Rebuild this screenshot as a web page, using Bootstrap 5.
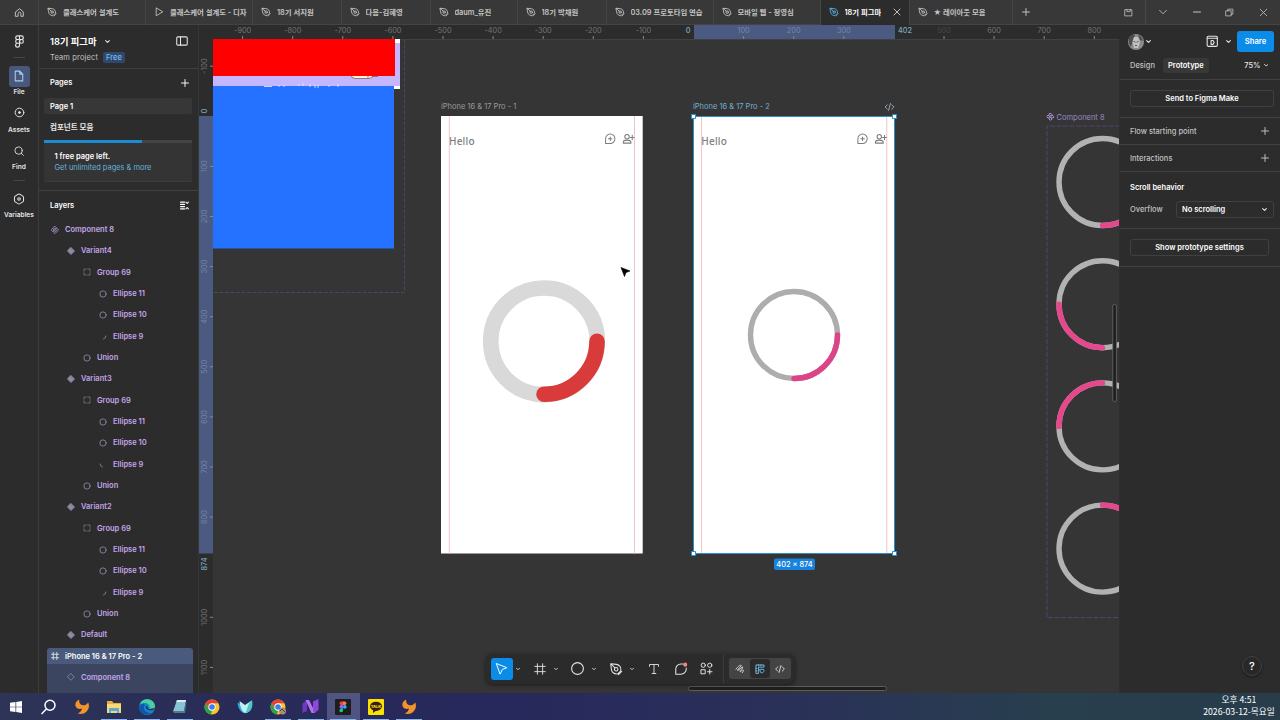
<!DOCTYPE html>
<html lang="en">
<head>
<meta charset="UTF-8" />
<meta name="viewport" content="width=device-width, initial-scale=1" />
<title>18기 피그마</title>
<link href="https://cdn.jsdelivr.net/npm/bootstrap@5.3.0/dist/css/bootstrap.min.css" rel="stylesheet" />
<style>
  body {
    width: 1280px;
    height: 720px;
    overflow: hidden;
    background-color: #2c2c2c;
    color: #e8e8e8;
    font-family: Inter, "Noto Sans CJK KR", sans-serif;
    font-size: 7.5px;
    line-height: 11px;
  }
  svg { flex-shrink: 0; display: block; }
  .ico {
    fill: none;
    stroke: currentColor;
    stroke-width: 1.4;
    stroke-linecap: round;
    stroke-linejoin: round;
  }
  .ink { color: #e4e4e4; }

  /* window tabs */
  #tabBar { height: 25px; background-color: #383838; color: #c4c4c4; border-bottom: 1px solid #444; }
  .file-tab { height: 25px; padding-left: 8px; gap: 6px; border-right: 1px solid #454545; font-size: 7.35px; font-weight: 600; }
  .file-tab .tab-title { overflow: hidden; white-space: nowrap; }
  .file-tab.current { background-color: #2c2c2c; color: #fff; }
  .file-tab.current > svg:first-child { color: #5db4e8; }
  .win-btn { width: 33.4px; }

  /* left rail */
  #rail { width: 39px; border-right: 1px solid #3d3d3d; font-size: 6.6px; font-weight: 600; }
  #rail .rail-line { width: 11px; height: 1px; background-color: #484848; }
  #rail .rail-btn { width: 21px; height: 21px; border-radius: 3px; }
  #rail .rail-btn.on { background-color: #48577a; color: #9fd0f5; }

  /* layers panel */
  #sidePanel { width: 160px; border-right: 1px solid #363636; }
  .side-head { height: 44px; padding: 7px 10px 0 11px; border-bottom: 1px solid #3e3e3e; }
  .file-name { font-size: 9.3px; font-weight: 600; }
  .plan-tag { background-color: #30496b; color: #77b9f5; border-radius: 2px; font-size: 7.5px; line-height: 11px; padding: 0 3px; font-weight: 500; }
  .section-row { height: 27px; padding: 0 9px 0 11px; font-weight: 600; }
  .page-row { height: 16px; margin: 2px 6px 0 5px; padding-left: 6px; font-weight: 600; background-color: #373737; border-radius: 2px; }
  .upsell { margin: 5px 6px 0 5px; height: 42px; background-color: #343434; border-radius: 2px; border-bottom: 1px solid #3d3d3d; }
  .upsell .progress { height: 3px; background-color: #444; border-radius: 0; }
  .upsell .progress-bar { background-color: #1c8bd2; }
  .upsell a { color: #64b2de; text-decoration: none; letter-spacing: -0.005em; }
  .layer-row { height: 21.33px; gap: 6px; color: #c2a5e8; font-weight: 600; }
  .layer-row .ico { color: #9288a5; stroke-width: 1.7; }
  .layer-row.top-item .ico { color: #b49bd8; }
  .layer-row.picked { height: 16px; margin: 2.7px 5px 0 8px; background-color: #4a5a7c; color: #fff; border-radius: 3px 3px 0 0; }
  .layer-row.picked .ico { color: #e8e8e8; }
  .layer-row.in-picked { height: 29px; margin: 0 5px 0 8px; background-color: #3c455f; padding-bottom: 3px; }
  .layer-row.in-picked .ico { color: #8e87b5; }

  /* canvas */
  #board { width: 921px; background-color: #353535; }
  .tool-bar { left: 287px; top: 629px; width: 309px; height: 30px; background-color: #2b2b2b; border-radius: 7px; box-shadow: 0 1px 4px rgba(0,0,0,0.5); padding: 0 0 1px 4.5px; }
  .tool { width: 22px; height: 22px; border-radius: 3px; }
  .tool .ico { stroke-width: 1.2; }
  .tool.on { background-color: #0c8ce9; color: #fff; }
  .tool-more { width: 16px; height: 22px; padding-right: 5px; }
  .mode-group { width: 62px; height: 21px; background-color: #444; border-radius: 3px; padding: 1px; }
  .mode-group > span { width: 20px; }
  .mode-group .on { background-color: #2b2b2b; color: #74c5f0; border-radius: 3px; }

  /* prototype panel */
  #propPanel { width: 160px; font-weight: 500; }
  .avatar { width: 16px; height: 16px; }
  .share-btn { width: 37px; height: 21px; background-color: #0c8ce9; border-radius: 3px; font-weight: 600; font-size: 7.6px; color: #fff; }
  .prop-tab { background-color: #383838; color: #fff; border-radius: 3px; padding: 2px 5px; font-weight: 600; height: 15px; }
  .prop-line { border-bottom: 1px solid #414141; }
  .outline-btn { border: 1px solid #404040; border-radius: 3px; color: #fff; height: 17px; font-weight: 600; }
  .muted { color: #c2c2c2; }
  .help-btn { width: 20px; height: 20px; right: 18px; bottom: 17px; border-radius: 50%; background-color: #282828; border: 1px solid #444; box-shadow: 0 1px 3px rgba(0,0,0,0.5); font-size: 11px; color: #fff; font-weight: 500; }

  /* taskbar */
  #taskBar { height: 27px; background: linear-gradient(90deg, #2d3457 0, #292b57 240px, #27285c 500px, #2a3158 800px, #283f4e 1050px, #283c4a 1280px); }
  .task { width: 32.7px; height: 27px; }
  .task.running { background: linear-gradient(#85b5f0, #85b5f0) center bottom / 26px 1.5px no-repeat; }
  .task.front { background-color: #505480; }
  .clock { width: 82px; font-family: "Noto Sans CJK KR", sans-serif; font-size: 8.7px; line-height: 12px; padding-bottom: 2px; }
</style>
</head>
<body class="d-flex flex-column">

<svg width="0" height="0" class="position-absolute">
  <defs>
    <symbol id="i-home" viewBox="0 0 16 16"><path d="M2.500 7 8 2.500 13.500 7v6.500h-3.500v-4a2 2 0 0 0-4 0v4h-3.500z"/></symbol>
    <symbol id="i-pen" viewBox="0 0 16 16"><path d="M2 2l6.500.7c3.600.6 5.700 3.400 5 7.300l-3.500 3.500c-3.900.7-6.700-1.400-7.300-5zM2 2l4.800 4.800M14.500 10.800l-3.700 3.700"/><circle cx="8.200" cy="8.200" r="2"/></symbol>
    <symbol id="i-play" viewBox="0 0 16 16"><path d="M3.500 2v12l10-6z"/></symbol>
    <symbol id="i-close" viewBox="0 0 16 16"><path d="M2 2l12 12M14 2L2 14"/></symbol>
    <symbol id="i-plus" viewBox="0 0 16 16"><path d="M8 1v14M1 8h14" stroke-width="1.900"/></symbol>
    <symbol id="i-chev" viewBox="0 0 16 16"><path d="M2 5l6 6 6-6" stroke-width="3.400"/></symbol>
    <symbol id="i-down" viewBox="0 0 16 16"><path d="M1 4.500l7 7 7-7" stroke-width="1.700"/></symbol>
    <symbol id="i-box" viewBox="0 0 16 16"><path d="M2 3h12v11H2zM5 3v3.500h6V3"/></symbol>
    <symbol id="i-restore" viewBox="0 0 16 16"><path d="M2 5h9v9H2zM5 5V2h9v9h-3"/></symbol>
    <symbol id="i-figma" viewBox="0 0 16 16"><path d="M8 1H5.600a2.300 2.300 0 0 0 0 4.600H8zM8 1h2.400a2.300 2.300 0 0 1 0 4.600H8zM8 5.600H5.600a2.300 2.300 0 0 0 0 4.600H8zM8 10.200H5.600A2.400 2.400 0 1 0 8 12.600z"/><circle cx="10.400" cy="7.900" r="2.300"/></symbol>
    <symbol id="i-file" viewBox="0 0 16 16"><path d="M3 1.500h6l4 4v9H3zM9 1.500v4h4"/></symbol>
    <symbol id="i-assets" viewBox="0 0 16 16"><circle cx="8" cy="8" r="6.300"/><circle cx="8" cy="8" r="1.400" fill="currentColor"/></symbol>
    <symbol id="i-find" viewBox="0 0 16 16"><circle cx="7.300" cy="7.300" r="5.800"/><path d="M11.500 11.500l3.500 3.500"/></symbol>
    <symbol id="i-vars" viewBox="0 0 16 16"><path d="M8 1.300q1 0 5.500 3.200.6.500.6 3.500t-.6 3.500Q9 14.700 8 14.700t-5.500-3.200Q1.900 11 1.900 8t.6-3.500Q7 1.300 8 1.300z"/><circle cx="8" cy="8" r="1.700"/></symbol>
    <symbol id="i-side" viewBox="0 0 16 16"><rect x="1" y="2.500" width="14" height="11" rx="1.500"/><path d="M6 2.500v11"/></symbol>
    <symbol id="i-collapse" viewBox="0 0 16 16"><path d="M1 2h7M1 6h7M1 10h7M1 14h7M10.500 2l2.200 2.500L15 2M10.500 14l2.200-2.500L15 14" stroke-width="1.800"/></symbol>
    <symbol id="i-comp" viewBox="0 0 16 16"><path d="M8 .8l2.800 2.800L8 6.400 5.200 3.600zM8 9.600l2.800 2.800L8 15.200l-2.800-2.800zM3.600 5.200L6.400 8l-2.800 2.800L.8 8zM12.400 5.200L15.200 8l-2.800 2.800L9.600 8z"/></symbol>
    <symbol id="i-variant" viewBox="0 0 16 16"><path d="M8 1l7 7-7 7-7-7z" fill="currentColor"/></symbol>
    <symbol id="i-inst" viewBox="0 0 16 16"><path d="M8 1.500L14.500 8 8 14.500 1.500 8z"/></symbol>
    <symbol id="i-group" viewBox="0 0 16 16"><path d="M2 5V2h3M11 2h3v3M14 11v3h-3M5 14H2v-3M2 7.500v1M14 7.500v1M7.500 2h1M7.500 14h1" stroke-width="1.300"/></symbol>
    <symbol id="i-circle" viewBox="0 0 16 16"><circle cx="8" cy="8" r="6.300"/></symbol>
    <symbol id="i-arcR" viewBox="0 0 16 16"><path d="M14 8a7 7 0 0 1-5 6"/></symbol>
    <symbol id="i-arcL" viewBox="0 0 16 16"><path d="M2 8a7 7 0 0 0 5 6"/></symbol>
    <symbol id="i-frame" viewBox="0 0 16 16"><path d="M4.500 1v14M11.500 1v14M1 4.500h14M1 11.500h14"/></symbol>
    <symbol id="i-move" viewBox="0 0 16 16"><path d="M2 2l12.500 5-5.500 2.200L6.500 14.500z"/></symbol>
    <symbol id="i-text" viewBox="0 0 16 16"><path d="M2 4.500V2h12v2.500M8 2v12M5.500 14h5"/></symbol>
    <symbol id="i-note" viewBox="0 0 16 16"><path d="M10 2.200H8A6 6 0 0 0 2 8v6h6a6 6 0 0 0 6-6V7"/><circle cx="12.800" cy="3" r="2.300" fill="#f58c78" stroke="none"/></symbol>
    <symbol id="i-actions" viewBox="0 0 16 16"><circle cx="4" cy="4" r="2.600"/><circle cx="12" cy="4" r="2.600"/><rect x="1.600" y="9.500" width="4.800" height="5"/><path d="M12 9.200v5.600M9.200 12h5.600"/></symbol>
    <symbol id="i-draw" viewBox="0 0 16 16"><path d="M1.500 8.500C4 4 9.500.5 10 2.500S3 8.500 4 10 11.500 3.500 12.500 5 7 10.500 8 12s3.500-3.500 5-2.500-.5 2.500-1.500 4.500"/></symbol>
    <symbol id="i-design" viewBox="0 0 16 16"><path d="M1.500 14.500v-13h13V5H5.500v9.500zM5.500 1.500V3M9.500 1.500V3M1.500 7H3M1.500 11H3M8 8.500h5.500Q15 10 14 12l-2.500 2.500Q8 14 8 11.500z"/></symbol>
    <symbol id="i-code" viewBox="0 0 16 16"><path d="M4.500 4.500L1 8l3.500 3.500M11.500 4.500L15 8l-3.500 3.500M9.500 2.500l-3 11"/></symbol>
    <symbol id="i-present" viewBox="0 0 16 16"><rect x="1.500" y="1.500" width="13" height="13" rx="1.500"/><path d="M1.500 4.200h13M6.500 7v5h2.500l1.500-2.500L9 7z"/></symbol>
    <symbol id="i-chatadd" viewBox="0 0 16 16"><path d="M1.500 14.500V8A6.500 6.500 0 1 1 8 14.500zM8 5.500v5M5.500 8h5"/></symbol>
    <symbol id="i-useradd" viewBox="0 0 16 16"><circle cx="6" cy="5" r="2.900"/><path d="M.8 13.500v-1c0-2 3.200-3 5.200-3s5.200 1 5.200 3v1zM13 3v6M10.300 6h5.500"/></symbol>
  </defs>
</svg>

<!-- window tabs -->
<div id="tabBar" class="d-flex align-items-center flex-shrink-0">
  <div class="file-tab d-flex align-items-center p-0 justify-content-center" style="width:39px">
    <svg class="ico" width="11" height="11"><use href="#i-home"/></svg>
  </div>
  <div id="fileTabs" class="d-flex"></div>
  <div class="d-flex justify-content-center" style="width:27px"><svg class="ico" width="8" height="8"><use href="#i-plus"/></svg></div>
  <div class="d-flex ms-auto align-items-center h-100">
    <div class="d-flex justify-content-center align-items-center h-100 border-end" style="width:34px;border-color:#484848!important"><svg class="ico" width="9" height="9"><use href="#i-box"/></svg></div>
    <div class="win-btn d-flex justify-content-center"><svg class="ico" width="8" height="8"><use href="#i-down"/></svg></div>
    <div class="win-btn d-flex justify-content-center"><svg class="ico" width="8" height="8" viewBox="0 0 16 16"><path d="M1 8h14" stroke-width="2"/></svg></div>
    <div class="win-btn d-flex justify-content-center"><svg class="ico" width="9" height="9"><use href="#i-restore"/></svg></div>
    <div class="win-btn d-flex justify-content-center"><svg class="ico" width="9" height="9"><use href="#i-close"/></svg></div>
  </div>
</div>

<div class="d-flex flex-shrink-0" style="height:668px">

  <!-- left rail -->
  <nav id="rail" class="d-flex flex-column align-items-center flex-shrink-0 ink">
    <svg class="ico" width="13" height="13" style="margin-top:9.500px"><use href="#i-figma"/></svg>
    <div class="rail-line" style="margin:9px 0 8px"></div>
    <div class="rail-btn on d-flex align-items-center justify-content-center"><svg class="ico" width="12" height="12"><use href="#i-file"/></svg></div>
    <span>File</span>
    <svg class="ico" width="11" height="11" style="margin-top:9.500px"><use href="#i-assets"/></svg>
    <span style="margin-top:7px">Assets</span>
    <svg class="ico" width="10" height="10" style="margin-top:10px"><use href="#i-find"/></svg>
    <span style="margin-top:6px">Find</span>
    <div class="rail-line" style="margin:7px 0 12px"></div>
    <svg class="ico" width="12" height="12"><use href="#i-vars"/></svg>
    <span style="margin-top:5px">Variables</span>
  </nav>

  <!-- pages and layers -->
  <aside id="sidePanel" class="flex-shrink-0 overflow-hidden">
    <div class="side-head">
      <div class="d-flex align-items-center" style="height:18px">
        <span class="file-name text-white">18기 피그마</span>
        <svg class="ico ink" width="5" height="5" style="margin-left:9px"><use href="#i-chev"/></svg>
        <svg class="ico ink ms-auto" width="12" height="12"><use href="#i-side"/></svg>
      </div>
      <div class="d-flex align-items-center" style="height:14px;gap:5px">
        <span class="muted" style="letter-spacing:.02em">Team project</span><span class="plan-tag">Free</span>
      </div>
    </div>
    <div class="section-row d-flex align-items-center justify-content-between text-white">
      <span>Pages</span><svg class="ico" width="8" height="8"><use href="#i-plus"/></svg>
    </div>
    <div class="page-row d-flex align-items-center text-white">Page 1</div>
    <div class="d-flex align-items-center fw-semibold" style="height:21px;padding:5px 0 0 11px">컴포넌트 모음</div>
    <div class="upsell">
      <div class="progress"><div class="progress-bar" style="width:66%"></div></div>
      <div style="padding:8px 10.500px 0">
        <div class="fw-semibold text-white">1 free page left.</div>
        <a href="#">Get unlimited pages &amp; more</a>
      </div>
    </div>
    <div class="prop-line" style="height:9px"></div>
    <div class="section-row d-flex align-items-center justify-content-between text-white" style="height:28px;padding-top:1px">
      <span>Layers</span><svg class="ico" width="9" height="9"><use href="#i-collapse"/></svg>
    </div>
    <div id="layerList"></div>
  </aside>

  <!-- canvas -->
  <main id="board" class="position-relative flex-shrink-0">
    <svg id="canvasArt" width="921" height="668" viewBox="199 25 921 668">
      <!-- cropped banner on the left -->
      <path d="M404.500 39V292.500H213" fill="none" stroke="#4a4568" stroke-dasharray="4 1.500"/>
      <rect x="213" y="39" width="187" height="49" fill="#c4b6ff"/>
      <path d="M395 39h5v4h-5z" fill="#fff"/>
      <path d="M394 86h6v3h-6z" fill="#fff"/>
      <rect x="351" y="70" width="22" height="8.500" rx="4" fill="#fff3e2" stroke="#7d5d55" stroke-width=".8"/>
      <path d="M368 76v2M372 76.500h6" stroke="#7d5d55" stroke-width=".8"/>
      <rect x="213" y="38" width="182" height="38" fill="#f00"/>
      <rect x="213" y="86" width="181" height="162.500" fill="#2472ff"/>
      <path d="M264 86.500h8M279 85v2M284 85v2M299 84v2M303 83v3M310 84v3M315 85v3M318 85v3M329 85v2M338 84v3" stroke="#eef" stroke-width=".8"/>

      <!-- first frame -->
      <text x="441" y="109.300" font-size="7.500" fill="#9a9a9a">iPhone 16 &amp; 17 Pro - 1</text>
      <rect x="441" y="116" width="201.700" height="437.500" fill="#fff"/>
      <g id="phoneHead">
        <path d="M449.300 116v437.500M634.500 116v437.500" stroke="#eec6c6"/>
        <text x="449" y="144.500" font-size="10" font-weight="500" fill="#7e7e7e" font-family="Noto Sans" letter-spacing="0.200">Hello</text>
        <g class="ico" color="#7c7c7c"><use href="#i-chatadd" x="604.500" y="133" width="11.500" height="11.500"/><use href="#i-useradd" x="622.500" y="133" width="12" height="12"/></g>
      </g>
      <g fill="none" stroke-width="15.600">
        <circle cx="544" cy="341.300" r="53.300" stroke="#d9d9d9"/>
        <path d="M597 341.300A53 53 0 0 1 544 394.300" stroke="#d93b3b" stroke-linecap="round"/>
      </g>
      <path d="M621 267.500l9 3.500-4 1.500-1.500 4z" fill="#000" stroke="#000" stroke-width=".6"/>

      <!-- selected frame -->
      <text x="693" y="109.300" font-size="7.500" fill="#6fb0d0">iPhone 16 &amp; 17 Pro - 2</text>
      <use href="#i-code" class="ico" color="#9fb6c4" x="884.500" y="102" width="10" height="10"/>
      <rect x="693.500" y="116.500" width="201" height="437" fill="#fff"/>
      <use href="#phoneHead" x="252.300"/>
      <rect x="693.500" y="116.500" width="201" height="437" fill="none" stroke="#2b8fc9"/>
      <g fill="#fff" stroke="#2b8fc9"><path d="M691.500 114.500h4v4h-4zM892.500 114.500h4v4h-4zM691.500 551.500h4v4h-4zM892.500 551.500h4v4h-4z"/></g>
      <g fill="none" stroke-width="5.400" stroke-linecap="round">
        <circle cx="794" cy="335" r="43.500" stroke="#adadad"/>
        <path d="M837.500 335A43.500 43.500 0 0 1 794 378.500" stroke="#dd4488"/>
      </g>
      <rect x="774" y="558.500" width="41" height="11.500" rx="2" fill="#1783de"/>
      <text x="794.500" y="567.200" font-size="7.400" font-weight="500" fill="#fff" text-anchor="middle">402 × 874</text>

      <!-- component set -->
      <use href="#i-comp" class="ico" color="#b99be2" style="stroke-width:2" x="1046.500" y="112.800" width="8" height="8"/>
      <text x="1056.500" y="119.500" font-size="7.500" fill="#9d86c2">Component 8</text>
      <path d="M1120 126H1047V617.500H1120" fill="none" stroke="#4f4470" stroke-dasharray="5 1.500"/>
      <g fill="none" stroke-width="5.400">
        <g stroke="#b2b2b2"><circle cx="1102.500" cy="182" r="43.500"/><circle cx="1102.500" cy="304.200" r="43.500"/><circle cx="1102.500" cy="426.400" r="43.500"/><circle cx="1102.500" cy="548.600" r="43.500"/></g>
        <g stroke="#e5488c" stroke-linecap="round">
          <path d="M1146 182a43.500 43.500 0 0 1-43.500 43.500"/>
          <path d="M1102.500 347.700a43.500 43.500 0 0 1-43.500-43.500"/>
          <path d="M1059 426.400a43.500 43.500 0 0 1 43.500-43.500"/>
          <path d="M1102.500 505.100a43.500 43.500 0 0 1 43.500 43.500"/>
        </g>
      </g>
      <path d="M1119.500 25v668" stroke="#2f2f2f"/>

      <!-- rulers -->
      <rect x="199" y="25" width="921" height="14" fill="#2c2c2c"/>
      <rect x="199" y="25" width="14" height="668" fill="#2c2c2c"/>
      <path d="M400 39.500H1119" stroke="#414141"/>
      <rect x="694" y="25" width="201" height="14" fill="#4a5a80"/>
      <rect x="199" y="116" width="14" height="437.500" fill="#4a5a80"/>
      <g id="ticks" font-size="7.300" text-anchor="middle"></g>

      <!-- scroll bars -->
      <g fill="#1f1f1f" stroke="#6a6a6a" stroke-width=".8"><rect x="1112.800" y="304.500" width="3.600" height="97" rx="1.500"/><rect x="688.500" y="686.500" width="198" height="4" rx="2"/></g>
    </svg>

    <div class="tool-bar position-absolute d-flex align-items-center ink">
      <span class="tool on d-flex align-items-center justify-content-center"><svg class="ico" width="13" height="13"><use href="#i-move"/></svg></span>
      <span class="tool-more d-flex align-items-center justify-content-center"><svg class="ico" width="4" height="4"><use href="#i-chev"/></svg></span>
      <span class="tool d-flex align-items-center justify-content-center"><svg class="ico" width="12" height="12"><use href="#i-frame"/></svg></span>
      <span class="tool-more d-flex align-items-center justify-content-center"><svg class="ico" width="4" height="4"><use href="#i-chev"/></svg></span>
      <span class="tool d-flex align-items-center justify-content-center"><svg class="ico" width="15" height="15"><use href="#i-circle"/></svg></span>
      <span class="tool-more d-flex align-items-center justify-content-center"><svg class="ico" width="4" height="4"><use href="#i-chev"/></svg></span>
      <span class="tool d-flex align-items-center justify-content-center"><svg class="ico" width="14" height="14"><use href="#i-pen"/></svg></span>
      <span class="tool-more d-flex align-items-center justify-content-center"><svg class="ico" width="4" height="4"><use href="#i-chev"/></svg></span>
      <span class="tool d-flex align-items-center justify-content-center"><svg class="ico" width="12" height="12"><use href="#i-text"/></svg></span>
      <span class="tool d-flex align-items-center justify-content-center" style="margin-left:5px"><svg class="ico" width="14" height="14"><use href="#i-note"/></svg></span>
      <span class="tool d-flex align-items-center justify-content-center" style="margin-left:4px"><svg class="ico" width="13" height="13"><use href="#i-actions"/></svg></span>
      <span style="width:1px;height:29px;background:#3c3c3c;margin:0 4.500px 0 5.500px"></span>
      <span class="mode-group d-flex">
        <span class="d-flex align-items-center justify-content-center"><svg class="ico" width="10" height="10"><use href="#i-draw"/></svg></span>
        <span class="on d-flex align-items-center justify-content-center"><svg class="ico" width="10" height="10"><use href="#i-design"/></svg></span>
        <span class="d-flex align-items-center justify-content-center"><svg class="ico" width="10" height="10"><use href="#i-code"/></svg></span>
      </span>
    </div>
  </main>

  <!-- prototype panel -->
  <aside id="propPanel" class="position-relative flex-shrink-0">
    <div class="d-flex align-items-center" style="height:33px;padding:0 6px 0 8px">
      <svg class="avatar" viewBox="0 0 16 16">
        <circle cx="8" cy="8" r="8" fill="#8c8c8c"/>
        <path d="M1 4Q3 0 7 1L5 6 3 13Q0 9 1 4zM10 1q4 1 5 6l-3-1z" fill="#4d4d4d"/>
        <path d="M6 3l4 0 2 5-2 6H6L4.500 8z" fill="#c2c2c2"/>
        <path d="M5.500 7.500l2 .7M10.500 7.500l-2 .7M7 11.500h2" stroke="#555"/>
      </svg>
      <svg class="ico ink" width="5" height="5" style="margin-left:2px"><use href="#i-chev"/></svg>
      <svg class="ico ink ms-auto" width="12.500" height="12.500"><use href="#i-present"/></svg>
      <svg class="ico ink" width="5" height="5" style="margin:0 6px 0 8px"><use href="#i-chev"/></svg>
      <span class="share-btn d-flex align-items-center justify-content-center">Share</span>
    </div>
    <div class="prop-line d-flex" style="height:22px;padding:0 12px 0 10px">
      <span class="muted" style="padding-top:2px;width:33px">Design</span>
      <span class="prop-tab">Prototype</span>
      <span class="ms-auto d-flex align-items-center" style="height:15px">75%<svg class="ico ink" width="4.500" height="4.500" style="margin-left:3px"><use href="#i-chev"/></svg></span>
    </div>
    <div class="prop-line" style="height:38px;padding:10px 6px 0 10px">
      <div class="outline-btn d-flex align-items-center justify-content-center">Send to Figma Make</div>
    </div>
    <div class="prop-line d-flex align-items-center justify-content-between muted" style="height:27px;padding:0 11px 0 10px"><span>Flow starting point</span><svg class="ico" width="8" height="8"><use href="#i-plus"/></svg></div>
    <div class="prop-line d-flex align-items-center justify-content-between muted" style="height:27px;padding:0 11px 0 10px"><span>Interactions</span><svg class="ico" width="8" height="8"><use href="#i-plus"/></svg></div>
    <div class="prop-line" style="height:57px;padding:9.500px 6px 0 10px">
      <div class="fw-semibold text-white">Scroll behavior</div>
      <div class="d-flex align-items-center" style="padding-top:8.500px">
        <span class="muted" style="width:46px">Overflow</span>
        <span class="outline-btn flex-grow-1 d-flex align-items-center justify-content-between" style="padding:0 6px 0 5px">No scrolling<svg class="ico ink" width="5" height="5"><use href="#i-chev"/></svg></span>
      </div>
    </div>
    <div class="prop-line" style="height:38px;padding:10px 11px 0 10px">
      <div class="outline-btn d-flex align-items-center justify-content-center">Show prototype settings</div>
    </div>
    <span class="help-btn position-absolute d-flex align-items-center justify-content-center">?</span>
  </aside>
</div>

<!-- taskbar -->
<footer id="taskBar" class="d-flex align-items-center flex-shrink-0">
  <span class="task d-flex align-items-center justify-content-center"><svg width="12" height="12" viewBox="0 0 12 12"><path d="M0 1.800l5.500-.8v4.700H0zM6.200.9L12 0v5.700H6.200zM0 6.300h5.500V11L0 10.200zM6.200 6.300H12V12l-5.800-.9z" fill="#fff"/></svg></span>
  <span class="task d-flex align-items-center justify-content-center"><svg width="16" height="16" viewBox="0 0 16 16"><g fill="none" stroke="#fff" stroke-width="1.500"><circle cx="9" cy="6.300" r="5"/><path d="M5.300 10L.5 15"/></g></svg></span>
  <span class="task d-flex align-items-center justify-content-center"><svg width="15" height="16" viewBox="0 0 16 16"><path id="swirl" d="M5.500 0C2 1.500.5 5 2 7.700c1.300 2.300 4 2.800 6.500 2-.3 2.300-2 4.300-4.500 5.300 6 2 11.500-2 12-8 0-1.600-.4-3-1-4.200-.7 1.900-2.200 3-4.200 3.200C7.500 6.500 5 4 5.500 0z" fill="#f0942c"/></svg></span>
  <span class="task running d-flex align-items-center justify-content-center"><svg width="16" height="14" viewBox="0 0 16 14"><path d="M1 1h5l1.500 2H15v10H1z" fill="#e8ae3a"/><path d="M1 4h14v9H1z" fill="#fbd873"/><path d="M3 8h10v5h-2v-2H5v2H3z" fill="#5aa9d8"/></svg></span>
  <span class="task running d-flex align-items-center justify-content-center"><svg width="16" height="16" viewBox="0 0 16 16"><circle cx="8" cy="8" r="8" fill="#1784d0"/><path d="M1 5C4-2 15-1 16 7c0 3-3 4-6 3 2-3-1-6-4-6C4 4 2 4.500 1 5z" fill="#48cf9c"/><path d="M6 6c-3 3 0 8 6 8-5 4-12 0-12-6 1-3 4-4 6-2z" fill="#0d56a8"/><path d="M7 7c-1 3 2 5 7 4l2-2-6 1C8 9 9 7 7 7z" fill="#29305a"/></svg></span>
  <span class="task running d-flex align-items-center justify-content-center"><svg width="15" height="15" viewBox="0 0 15 15"><path d="M5 1l9 0-2 11.500-11 0z" fill="#86c3d4"/><path d="M5 1l9 0-.4 2-9.300 0z" fill="#dcebef"/><path d="M1 12l11 0 1.500-9L14.500 3 13 14H2z" fill="#50798c"/></svg></span>
  <span class="task d-flex align-items-center justify-content-center"><svg width="16" height="16" viewBox="0 0 16 16"><g id="chrome"><circle cx="8" cy="8" r="7.500" fill="#f9c52b"/><path d="M1.500 4.200A7.500 7.500 0 0 1 14.500 4.300H8L4.800 9.800z" fill="#e34133"/><path d="M1.500 4.200L4.800 9.900 8 11.700 7 15.400A7.500 7.500 0 0 1 1.500 4.200z" fill="#2ba24c"/><circle cx="8" cy="8" r="3.700" fill="#fff"/><circle cx="8" cy="8" r="2.800" fill="#3b7fec"/></g></svg></span>
  <span class="task d-flex align-items-center justify-content-center"><svg width="16" height="15" viewBox="0 0 16 15"><path d="M.5 3.500l7 3.500 3 7C5 15 1 11 .5 3.500z" fill="#27a9d8"/><path d="M2.500 2l5.500 4 6-4c1.500 7-1 12-6 12-3-1-5-6-5.500-12z" fill="#bff0ee"/><path d="M15 1c1.500 7-1 13-7 13 3-3 2-9 7-13z" fill="#4cc9c4"/></svg></span>
  <span class="task running d-flex align-items-center justify-content-center"><svg width="16" height="16" viewBox="0 0 16 16"><use href="#chrome"/><circle cx="12.500" cy="12" r="3.500" fill="#a88c7c"/><path d="M10 12l2-2 3 3" stroke="#51423d" fill="none"/></svg></span>
  <span class="task running d-flex align-items-center justify-content-center"><svg width="17" height="15" viewBox="0 0 17 15"><path d="M.5 4.500L5 1v11l-4.500 2z" fill="#6f38c2"/><path d="M3.500 1H7l6.500 13H9.500z" fill="#b372f2"/><path d="M11 2.500L16.500 0v11L12 14l-1-2z" fill="#8d48da"/></svg></span>
  <span class="task running front d-flex align-items-center justify-content-center"><svg width="16" height="16" viewBox="0 0 16 16"><rect width="16" height="16" rx="1" fill="#1d1d1f"/><path d="M8 2.500H6.300a1.800 1.800 0 0 0 0 3.600H8z" fill="#f24e1e"/><path d="M8 2.500h1.700a1.800 1.800 0 0 1 0 3.600H8z" fill="#ff7262"/><path d="M8 6.100H6.300a1.800 1.800 0 0 0 0 3.600H8z" fill="#a259ff"/><circle cx="9.800" cy="7.900" r="1.800" fill="#1abcfe"/><path d="M8 9.700H6.300A1.800 1.800 0 1 0 8 11.500z" fill="#0acf83"/></svg></span>
  <span class="task running d-flex align-items-center justify-content-center"><svg width="16" height="16" viewBox="0 0 16 16"><rect width="16" height="16" rx="1" fill="#fae100"/><ellipse cx="8" cy="7.300" rx="6" ry="4.600" fill="#371d1e"/><path d="M5 10v4l4-3z" fill="#371d1e"/><text x="8" y="8.800" font-size="4" font-weight="800" fill="#fae100" text-anchor="middle">TALK</text></svg></span>
  <span class="task running d-flex align-items-center justify-content-center"><svg width="15" height="16" viewBox="0 0 16 16"><use href="#swirl"/></svg></span>
  <div class="clock ms-auto text-center text-white">오후 4:51<br>2026-03-12-목요일</div>
</footer>

<script src="https://cdn.jsdelivr.net/npm/bootstrap@5.3.0/dist/js/bootstrap.bundle.min.js"></script>
<script>
  const tabs = [
    { title: '클래스케어 설계도', width: 107 },
    { title: '클래스케어 설계도 - 디자', width: 107, icon: 'play' },
    { title: '18기 서지원', width: 88.5 },
    { title: '다음-김혜영', width: 89 },
    { title: 'daum_유진', width: 87 },
    { title: '18기 박채원', width: 89 },
    { title: '03.09 프로토타입 연습', width: 107 },
    { title: '모바일 웹 - 정영심', width: 107 },
    { title: '18기 피그마', width: 89, current: true },
    { title: '★ 레이아웃 모음', width: 103 }
  ];

  const variant = (name, arc) => [
    [1, 'variant', name], [2, 'group', 'Group 69'],
    [3, 'circle', 'Ellipse 11'], [3, 'circle', 'Ellipse 10'], [3, arc, 'Ellipse 9'],
    [2, 'circle', 'Union']
  ];
  const layers = [
    [0, 'comp', 'Component 8', 'top-item'],
    ...variant('Variant4', 'arcR'),
    ...variant('Variant3', 'arcL'),
    ...variant('Variant2', 'arcR'),
    [1, 'variant', 'Default'],
    [0, 'frame', 'iPhone 16 & 17 Pro - 2', 'picked'],
    [1, 'inst', 'Component 8', 'in-picked']
  ];

  function icon(name, size) {
    return `<svg class="ico" width="${size}" height="${size}"><use href="#i-${name}"/></svg>`;
  }

  function renderTabs() {
    const fileTabs = document.getElementById('fileTabs');
    tabs.forEach(tab => {
      const el = document.createElement('div');
      el.className = 'file-tab d-flex align-items-center' + (tab.current ? ' current' : '');
      el.style.width = tab.width + 'px';
      el.innerHTML = icon(tab.icon || 'pen', 10) + `<span class="tab-title">${tab.title}</span>`;
      if (tab.current) el.innerHTML += '<span class="ms-auto me-2">' + icon('close', 8) + '</span>';
      fileTabs.appendChild(el);
    });
  }

  function renderLayers() {
    const layerList = document.getElementById('layerList');
    layers.forEach(([depth, type, name, extra]) => {
      const row = document.createElement('div');
      row.className = 'layer-row d-flex align-items-center ' + (extra || '');
      const inset = /picked/.test(extra || '') ? 4 : 12;
      row.style.paddingLeft = inset + depth * 16 + 'px';
      row.innerHTML = icon(type, 8) + '<span></span>';
      row.lastChild.textContent = name;
      layerList.appendChild(row);
    });
  }

  // 100 canvas units are 50.1px at this zoom level
  function renderRulers() {
    const ticks = document.getElementById('ticks');
    const step = 50.1;
    let out = '';
    for (let n = -9; n <= 8; n++) {
      if (n === 0 || n === 4) continue;
      const x = 693.5 + n * step;
      const color = n > 0 && n < 4 ? '#7485ad' : n === 5 ? '#484848' : '#747474';
      out += `<text x="${x}" y="33.300" fill="${color}">${n * 100}</text><path d="M${x} 36v3" stroke="#8a8a8a"/>`;
    }
    for (let n = -1; n <= 11; n++) {
      if (n === 0 || n === 9) continue;
      const y = 116.3 + n * step;
      const color = n > 0 && n < 9 ? '#7485ad' : '#747474';
      out += `<text transform="translate(207 ${y}) rotate(-90)" fill="${color}">${n * 100}</text><path d="M210 ${y}h3" stroke="#8a8a8a"/>`;
    }
    out += '<g fill="#7fa9c4" font-weight="500"><text x="688" y="33.300">0</text><text x="905" y="33.300">402</text>';
    out += '<text transform="translate(207 111) rotate(-90)">0</text><text transform="translate(207 564) rotate(-90)">874</text></g>';
    ticks.innerHTML = out;
  }

  renderTabs();
  renderLayers();
  renderRulers();
</script>
</body>
</html>
